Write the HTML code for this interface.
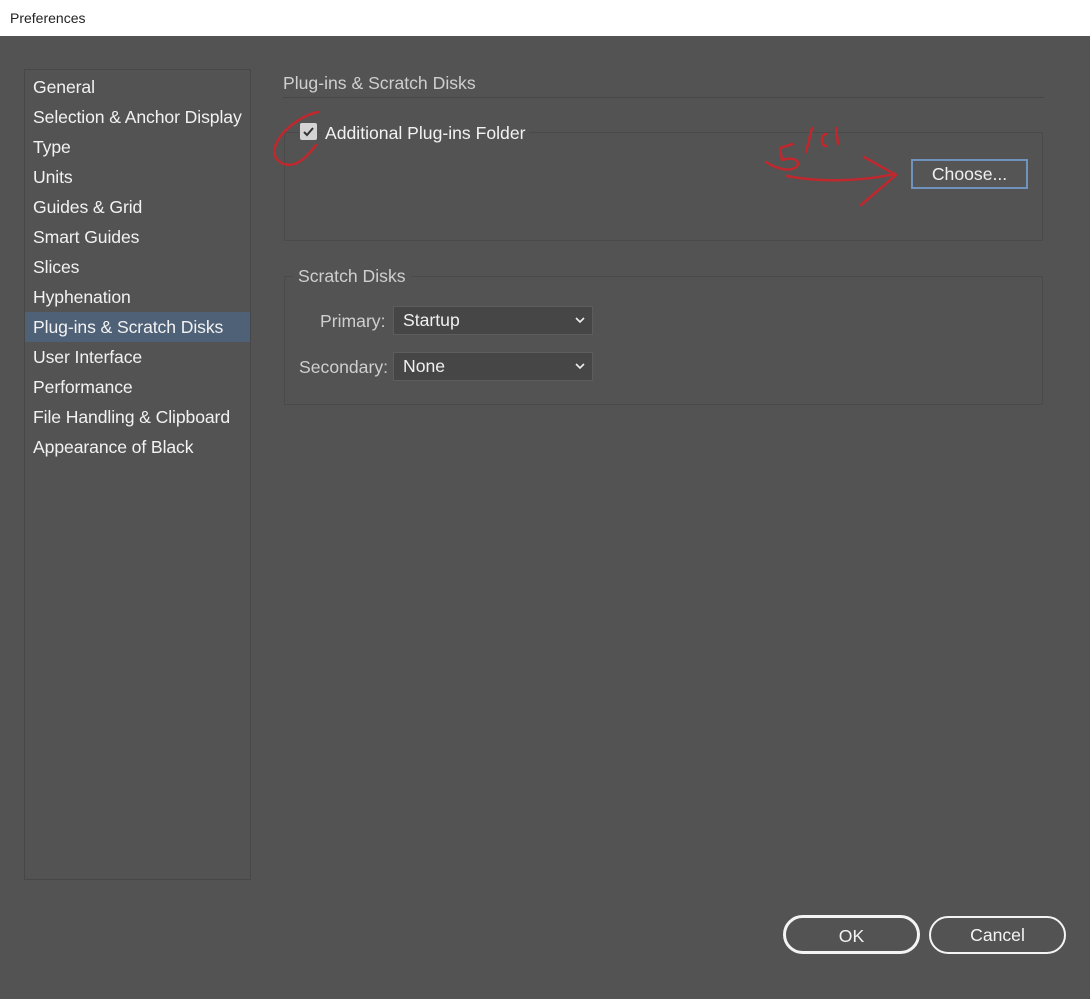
<!DOCTYPE html>
<html><head><style>
body{margin:0;width:1090px;height:999px;background:#535353;font-family:"Liberation Sans",sans-serif;position:relative;overflow:hidden;color:#f0f0f0}
.title{position:absolute;left:0;top:0;width:1090px;height:36px;background:#fff;color:#222;font-size:14px;line-height:36px;text-indent:10px}
.side{position:absolute;left:24px;top:69px;width:227px;height:811px;border:1px solid #474747;box-sizing:border-box}
.side div{height:30px;line-height:30px;padding-left:8px;font-size:17.6px;color:#f2f2f2;letter-spacing:-0.1px}
.side .sel{background:#4f6177}
.a{position:absolute}
.box{position:absolute;border:1px solid #4a4a4a;box-sizing:border-box}
.sel2{position:absolute;width:200px;height:29px;background:#464646;border:1px solid #5d5d5d;box-sizing:border-box;font-size:17.6px;line-height:27px;padding-left:9px}
.btn{position:absolute;border:2px solid #f4f4f4;border-radius:20px;box-sizing:border-box;text-align:center;font-size:17.6px;color:#f4f4f4}
.t{font-size:17.6px}
</style></head><body>
<div class="title">Preferences</div>
<div class="side">
<div style="margin-top:2px">General</div><div>Selection &amp; Anchor Display</div><div>Type</div><div>Units</div><div>Guides &amp; Grid</div><div>Smart Guides</div><div>Slices</div><div>Hyphenation</div><div class="sel">Plug-ins &amp; Scratch Disks</div><div>User Interface</div><div>Performance</div><div>File Handling &amp; Clipboard</div><div>Appearance of Black</div>
</div>
<div class="a t" style="left:283px;top:73px;color:#cfcfcf">Plug-ins &amp; Scratch Disks</div>
<div class="a" style="left:283px;top:97px;width:761px;height:1px;background:#474747"></div>
<div class="box" style="left:284px;top:132px;width:759px;height:109px"></div>
<div class="a" style="left:299px;top:122px;width:20px;height:20px;background:#535353"></div>
<div class="a" style="left:300px;top:123px;width:17px;height:17px;background:#d4d4d4;border-radius:2px"></div>
<svg class="a" style="left:300px;top:123px" width="17" height="17"><path d="M4 9l3 3 6-7" stroke="#333" stroke-width="2" fill="none"/></svg>
<div class="a t" style="left:321px;top:123px;padding:0 4px;background:#535353;color:#f2f2f2">Additional Plug-ins Folder</div>
<div class="a t" style="left:911px;top:159px;width:117px;height:30px;border:2px solid #6f93bd;box-sizing:border-box;background:#555;text-align:center;line-height:26px">Choose...</div>
<div class="box" style="left:284px;top:276px;width:759px;height:129px"></div>
<div class="a t" style="left:293px;top:266px;padding:0 5px;background:#535353;color:#cfcfcf">Scratch Disks</div>
<div class="a t" style="left:320px;top:311px;color:#cfcfcf">Primary:</div>
<div class="sel2" style="left:393px;top:306px">Startup</div>
<div class="a t" style="left:299px;top:357px;color:#cfcfcf">Secondary:</div>
<div class="sel2" style="left:393px;top:352px">None</div>
<svg class="a" style="left:574px;top:314px" width="12" height="60"><path d="M2 4l4 4 4-4M2 50l4 4 4-4" stroke="#eee" stroke-width="1.6" fill="none"/></svg>
<svg class="a" style="left:260px;top:110px" width="640" height="100"><g stroke="#c0282d" stroke-width="2.5" fill="none" stroke-linecap="round"><path d="M58 2C30 8 2 40 20 52C32 60 45 50 56 35"/><path d="M533 34L520 38L522 50C536 46 540 52 537 56C532 62 518 60 506 52"/><path d="M552 18l-6 24"/><path d="M566 24c-5 0-6 12 0 12M576 18l2 16"/><path d="M527 66c30 6 70 6 108 -2M604 47l32 18-35 30"/></g></svg>
<div class="btn" style="left:783px;top:915px;width:137px;height:39px;line-height:36px;border-width:3px">OK</div>
<div class="btn" style="left:929px;top:916px;width:137px;height:38px;line-height:34px">Cancel</div>
</body></html>
